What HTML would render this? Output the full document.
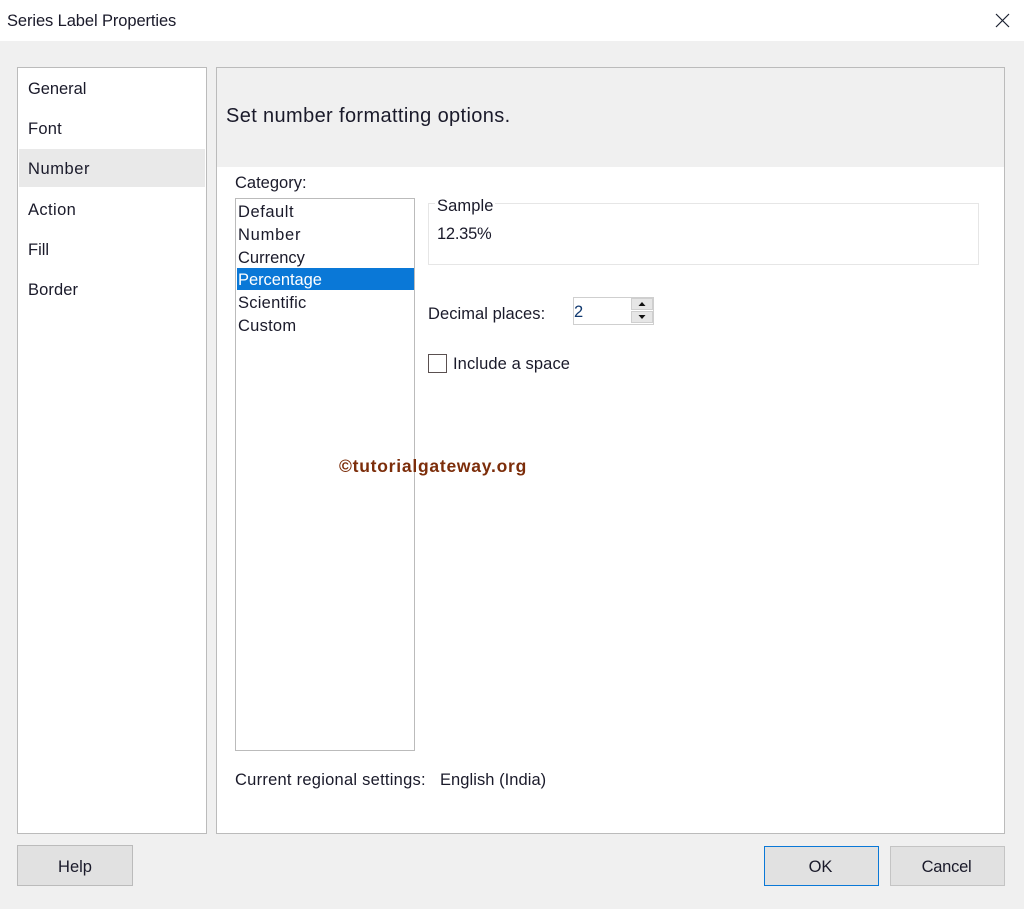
<!DOCTYPE html>
<html><head><meta charset="utf-8"><style>
html,body{margin:0;padding:0;width:1024px;height:909px;overflow:hidden;background:#f0f0f0}
*{box-sizing:border-box}
body{position:relative;font-family:"Liberation Sans",sans-serif;font-size:16.5px;color:#1a1a2a}
.a{position:absolute}
.t{position:absolute;white-space:nowrap;line-height:20px;height:20px;letter-spacing:.25px}
</style></head><body>
<div class="a" style="left:0;top:0;width:1024px;height:41px;background:#fff"></div>
<div class="t" style="left:7px;top:11px;letter-spacing:-.1px">Series Label Properties</div>
<svg class="a" style="left:995px;top:13px" width="15" height="15" viewBox="0 0 15 15"><path d="M1 1L14 14M14 1L1 14" stroke="#1a2030" stroke-width="1.2" fill="none"/></svg>

<div class="a" style="left:17px;top:67px;width:190px;height:767px;background:#fff;border:1px solid #bbb"></div>
<div class="a" style="left:19px;top:149px;width:186px;height:38px;background:#e9e9e9"></div>
<div class="t" style="left:28px;top:79px;letter-spacing:-.05px">General</div>
<div class="t" style="left:28px;top:119px">Font</div>
<div class="t" style="left:28px;top:159px;letter-spacing:.55px">Number</div>
<div class="t" style="left:28px;top:200px;letter-spacing:.4px">Action</div>
<div class="t" style="left:28px;top:240px;letter-spacing:0">Fill</div>
<div class="t" style="left:28px;top:280px;letter-spacing:.1px">Border</div>

<div class="a" style="left:216px;top:67px;width:789px;height:767px;background:#fff;border:1px solid #bbb"></div>
<div class="a" style="left:217px;top:68px;width:787px;height:99px;background:#f0f0f0"></div>
<div class="t" style="left:226px;top:106px;font-size:20px;letter-spacing:.37px">Set number formatting options.</div>

<div class="t" style="left:235px;top:173px;letter-spacing:0">Category:</div>
<div class="a" style="left:235px;top:198px;width:180px;height:553px;background:#fff;border:1px solid #bbb"></div>
<div class="a" style="left:237px;top:268px;width:177px;height:22px;background:#0a78d7"></div>
<div class="t" style="left:238px;top:202px;letter-spacing:.55px">Default</div>
<div class="t" style="left:238px;top:225px;letter-spacing:.75px">Number</div>
<div class="t" style="left:238px;top:248px;letter-spacing:0">Currency</div>
<div class="t" style="left:238px;top:270px;color:#fff;letter-spacing:-.05px">Percentage</div>
<div class="t" style="left:238px;top:293px">Scientific</div>
<div class="t" style="left:238px;top:316px">Custom</div>

<div class="a" style="left:428px;top:203px;width:551px;height:62px;border:1px solid #e6e6e6"></div>
<div class="a" style="left:435px;top:198px;width:60px;height:14px;background:#fff"></div>
<div class="t" style="left:437px;top:196px;letter-spacing:.1px">Sample</div>
<div class="t" style="left:437px;top:224px;letter-spacing:-.25px">12.35%</div>

<div class="t" style="left:428px;top:304px;letter-spacing:.05px">Decimal places:</div>
<div class="a" style="left:573px;top:297px;width:81px;height:28px;background:#fff;border:1px solid #cfcfcf"></div>
<div class="t" style="left:574px;top:302px;color:#123a70">2</div>
<div class="a" style="left:631px;top:298px;width:22px;height:12px;background:#e6e6e6;border:1px solid #cfcfcf"></div>
<div class="a" style="left:631px;top:311px;width:22px;height:12px;background:#e6e6e6;border:1px solid #cfcfcf"></div>
<svg class="a" style="left:631px;top:298px" width="22" height="26" viewBox="0 0 22 26"><path d="M7.5 8L14.5 8L11 4Z M7.5 17L14.5 17L11 21Z" fill="#111"/></svg>

<div class="a" style="left:428px;top:354px;width:19px;height:19px;background:#fff;border:1.5px solid #5a5050"></div>
<div class="t" style="left:453px;top:354px;letter-spacing:.1px">Include a space</div>

<div class="t" style="left:339px;top:456px;font-size:17.5px;font-weight:bold;color:#7c2d0a;letter-spacing:.75px">©tutorialgateway.org</div>

<div class="t" style="left:235px;top:770px">Current regional settings:</div>
<div class="t" style="left:440px;top:770px;letter-spacing:.05px">English (India)</div>

<div class="a" style="left:17px;top:845px;width:116px;height:41px;background:#e1e1e1;border:1px solid #bbb"></div>
<div class="t" style="left:17px;top:857px;width:116px;text-align:center;letter-spacing:0">Help</div>
<div class="a" style="left:764px;top:846px;width:115px;height:40px;background:#e1e1e1;border:1px solid #0a78d7"></div>
<div class="t" style="left:763px;top:857px;width:115px;text-align:center;letter-spacing:0">OK</div>
<div class="a" style="left:890px;top:846px;width:115px;height:40px;background:#e1e1e1;border:1px solid #c4c4c4"></div>
<div class="t" style="left:889px;top:857px;width:115px;text-align:center;letter-spacing:-.25px">Cancel</div>
</body></html>
